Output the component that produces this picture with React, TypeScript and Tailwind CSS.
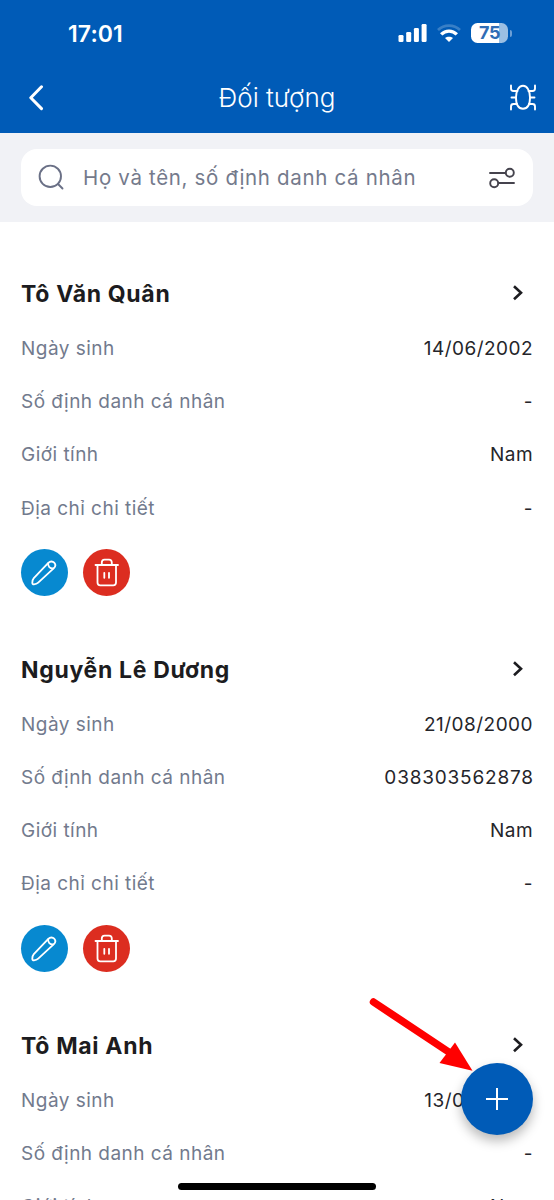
// App.tsx

import type { ReactNode } from "react";

interface Person {
  id: string;
  name: string;
  birthday: string;
  identityNumber?: string;
  gender: string;
  address?: string;
}

const people: Person[] = [
  { id: "1", name: "Tô Văn Quân", birthday: "14/06/2002", gender: "Nam" },
  {
    id: "2",
    name: "Nguyễn Lê Dương",
    birthday: "21/08/2000",
    identityNumber: "038303562878",
    gender: "Nam",
  },
  { id: "3", name: "Tô Mai Anh", birthday: "13/02/2003", gender: "Nam" },
];

function StatusBar() {
  return (
    <div className="flex h-[66px] items-center justify-between pr-[42px] pl-[68px]">
      <span className="pt-[2px] text-[23px] leading-none font-semibold tracking-[0.1px]">
        17:01
      </span>
      <div className="flex items-center">
        <svg width="29" height="18" viewBox="0 0 29 18" fill="currentColor">
          <rect x="0.5" y="11" width="5" height="7" rx="1.3" />
          <rect x="8.2" y="8" width="5" height="10" rx="1.3" />
          <rect x="15.9" y="4" width="5" height="14" rx="1.3" />
          <rect x="23.6" y="0" width="5" height="18" rx="1.3" />
        </svg>
        <svg
          className="ml-[10px]"
          width="24"
          height="18"
          viewBox="0 0 24 18"
          fill="none"
          stroke="currentColor"
        >
          <path d="M1 6C7 0.2 17 0.2 23 6" strokeWidth="2.8" opacity="0.22" />
          <path d="M4.2 10.4C8.6 6 15.4 6 19.8 10.4" strokeWidth="3.4" />
          <path
            d="M12 18L8 14C10.2 12.2 13.8 12.2 16 14Z"
            fill="currentColor"
            stroke="none"
          />
        </svg>
        <div className="ml-[10px] flex h-5 w-[37px] items-center justify-center rounded-[6.5px] bg-[linear-gradient(90deg,#fff_76%,#9bbfe3_76%)] text-[18px] leading-none font-bold tracking-[-0.4px] text-[#2f6db5]">
          75
        </div>
        <div className="ml-[1.5px] h-[7px] w-[2.5px] rounded-r-full bg-[#6c9fd6]" />
      </div>
    </div>
  );
}

function Header() {
  return (
    <header className="h-[133px] bg-[#005bb7] text-white">
      <StatusBar />
      <div className="flex h-[64px] items-center justify-between pr-[17px] pl-[27px]">
        <svg
          width="18"
          height="26"
          viewBox="0 0 18 26"
          fill="none"
          stroke="currentColor"
          strokeWidth="3"
          strokeLinecap="round"
          strokeLinejoin="round"
        >
          <path d="M14.5 1.8L3.8 12.7L14.5 23.6" />
        </svg>
        <h1 className="text-[26px] leading-none font-light">Đối tượng</h1>
        <svg
          width="28"
          height="28"
          viewBox="0 0 28 28"
          fill="none"
          stroke="currentColor"
          strokeWidth="1.9"
          strokeLinecap="round"
        >
          <path d="M14 1.8C9.5 1.8 7 7.5 7 13.6C7 19.6 8.8 24.8 14 24.8S21 19.6 21 13.6C21 7.5 18.500 1.800 14 1.800Z" />
          <path d="M2 1.5V4.5Q2 7 4.5 7H8.5M26 1.5V4.5Q26 7 23.5 7H19.5" />
          <path d="M2.500 13.500H7M21 13.500H25.500" />
          <path d="M2 25.5V22.5Q2 20 4.5 20H8M26 25.5V22.5Q26 20 23.5 20H20" />
        </svg>
      </div>
    </header>
  );
}

function SearchBar() {
  return (
    <div className="h-[89px] bg-[#f1f2f6] px-[21px] pt-4">
      <div className="flex h-[57px] items-center rounded-2xl bg-white px-[17px]">
        <svg
          width="27"
          height="27"
          viewBox="0 0 27 27"
          fill="none"
          stroke="#6a7086"
          strokeWidth="1.9"
          strokeLinecap="round"
        >
          <circle cx="12.3" cy="12.3" r="10.7" />
          <path d="M20 20L24.5 24.5" />
        </svg>
        <span className="ml-[18px] flex-1 pt-[2px] text-[20.5px] leading-none tracking-[0.67px] text-[#747a8c]">
          Họ và tên, số định danh cá nhân
        </span>
        <svg
          width="27"
          height="22"
          viewBox="0 0 27 22"
          fill="none"
          stroke="#45434d"
          strokeWidth="1.9"
          strokeLinecap="round"
        >
          <path d="M1 6H16.5M9.5 16H25" />
          <circle cx="20.8" cy="5.8" r="4" />
          <circle cx="5.2" cy="16.2" r="4" />
        </svg>
      </div>
    </div>
  );
}

interface InfoRowProps {
  label: string;
  value?: string;
  wide?: boolean;
}

function InfoRow({ label, value = "-", wide = false }: InfoRowProps) {
  return (
    <div className="flex h-[53.2px] items-center justify-between pt-[2px] text-[19px] leading-none tracking-[0.47px]">
      <span className="text-[#727a8d]">{label}</span>
      <span
        className={`text-[#25252a] ${wide ? "-mr-[0.8px] tracking-[0.8px]" : ""}`}
      >
        {value}
      </span>
    </div>
  );
}

function RoundButton({
  label,
  className,
  children,
}: {
  label: string;
  className: string;
  children: ReactNode;
}) {
  return (
    <button
      aria-label={label}
      className={`flex size-[47px] items-center justify-center rounded-full text-white ${className}`}
    >
      {children}
    </button>
  );
}

function PersonCard({ person }: { person: Person }) {
  return (
    <article className="h-[375.8px] shrink-0 px-[21px]">
      <div className="flex h-[54px] items-center justify-between">
        <h2 className="pt-px text-[23px] leading-none font-bold tracking-[0.68px] text-[#1c1c20]">
          {person.name}
        </h2>
        <svg
          className="mr-[9px] mb-[2px]"
          width="12"
          height="16"
          viewBox="0 0 12 16"
          fill="none"
          stroke="#1c1c20"
          strokeWidth="2.6"
        >
          <path d="M2 1.3L9 7.8L2 14.3" />
        </svg>
      </div>
      <InfoRow label="Ngày sinh" value={person.birthday} />
      <InfoRow
        label="Số định danh cá nhân"
        value={person.identityNumber}
        wide={Boolean(person.identityNumber)}
      />
      <InfoRow label="Giới tính" value={person.gender} />
      <InfoRow label="Địa chỉ chi tiết" value={person.address} />
      <div className="mt-[15px] flex gap-[15px]">
        <RoundButton label="Sửa" className="bg-[#0789d0]">
          <svg
            width="28"
            height="28"
            viewBox="0 0 28 28"
            fill="none"
            stroke="currentColor"
            strokeWidth="1.8"
            strokeLinejoin="round"
          >
            <path d="M17.3 4.800L2.800 20.200C1.500 21.700 1.300 23 1.300 24.700C1.300 25.900 2 26.400 3 26.300C5 26.200 6 25.800 7.200 24.700L22.900 10.200C24.600 8.500 24.600 6.200 23.200 4.700S19.200 3 17.300 4.800Z" />
            <path d="M17.300 4.800C16.400 8.100 19 11 22.900 10.200" />
          </svg>
        </RoundButton>
        <RoundButton label="Xóa" className="bg-[#dc2d20]">
          <svg
            width="26"
            height="30"
            viewBox="0 0 26 30"
            fill="none"
            stroke="currentColor"
            strokeWidth="1.8"
            strokeLinecap="round"
            strokeLinejoin="round"
          >
            <path d="M1.5 8H24" />
            <path d="M7.8 8V5.5Q7.8 2.6 10.5 2.6H15Q17.8 2.6 17.8 5.5V8" />
            <path d="M3.5 8V25.5Q3.5 28.3 6.3 28.3H19.2Q22 28.3 22 25.5V8" />
            <path d="M10.3 15.8V20.8M15 15.8V20.8" />
          </svg>
        </RoundButton>
      </div>
    </article>
  );
}

export default function App() {
  return (
    <main className="relative flex h-[1200px] w-[554px] flex-col overflow-hidden bg-white font-['Inter','Liberation_Sans',sans-serif]">
      <Header />
      <SearchBar />
      <section className="flex min-h-0 flex-1 flex-col overflow-hidden pt-[45px]">
        {people.map((person) => (
          <PersonCard key={person.id} person={person} />
        ))}
      </section>

      {/* Floating add button */}
      <button
        aria-label="Thêm"
        className="absolute right-[21px] bottom-[65px] flex size-[72px] items-center justify-center rounded-full bg-[#005bb7] shadow-[0_6px_12px_rgba(0,0,0,0.28)]"
      >
        <svg width="24" height="24" viewBox="0 0 24 24" stroke="#fff" strokeWidth="2">
          <path d="M12 1V23M1 12H23" />
        </svg>
      </button>

      {/* Pointer towards the add button */}
      <svg
        className="pointer-events-none absolute top-[996px] left-[367px]"
        width="108"
        height="78"
        viewBox="0 0 108 78"
      >
        <path d="M6.5 6L84 57.5" stroke="#ff0000" strokeWidth="7.5" strokeLinecap="round" />
        <path d="M88 46.5L105.5 74.8L72.5 67Z" fill="#ff0000" />
      </svg>

      {/* Home indicator */}
      <div className="absolute bottom-[10px] left-[178px] h-[7px] w-[198px] rounded-full bg-black" />
    </main>
  );
}
